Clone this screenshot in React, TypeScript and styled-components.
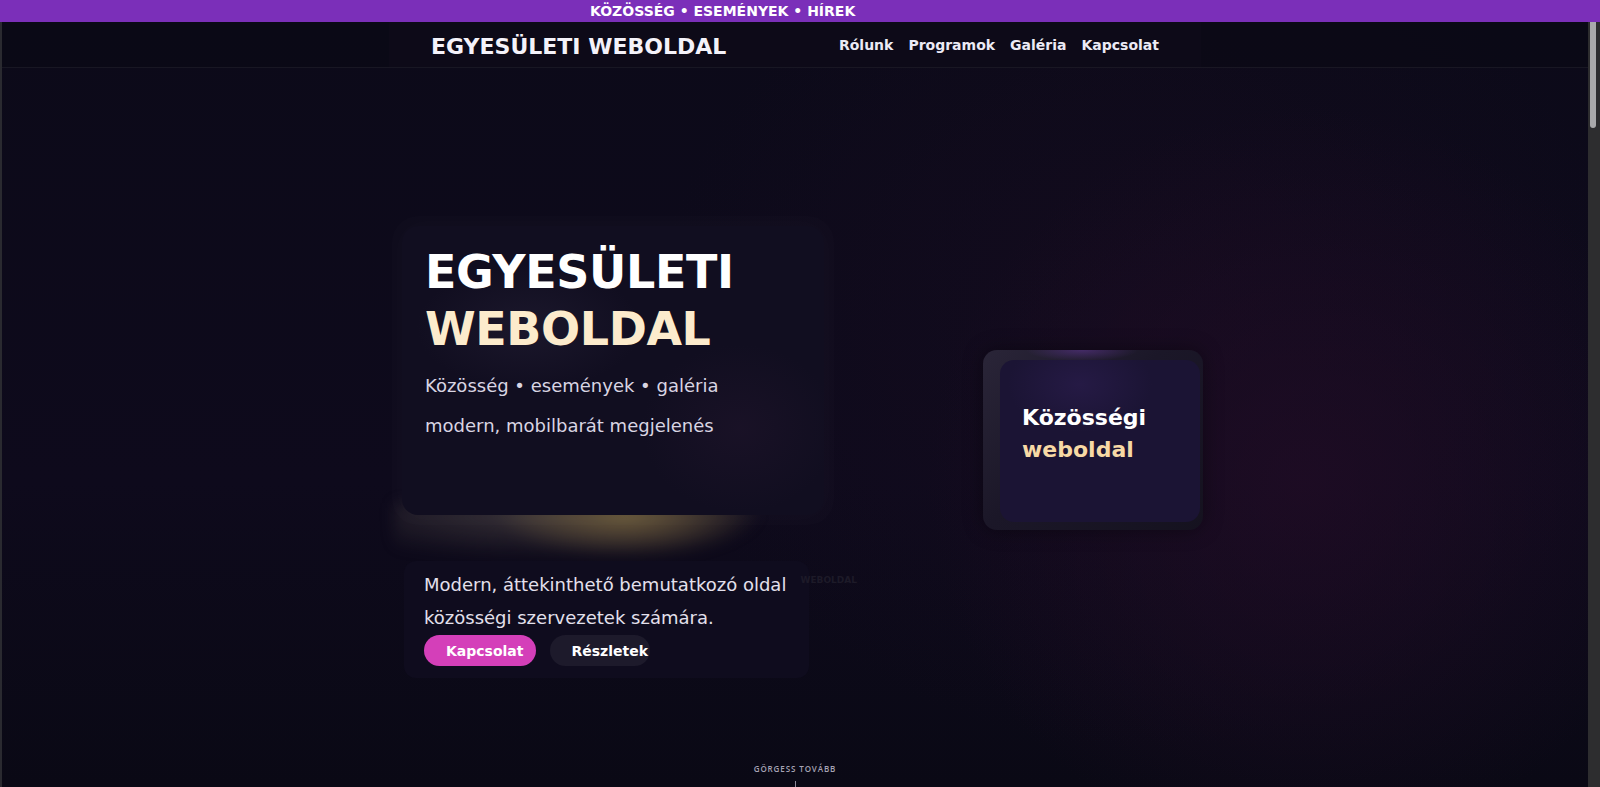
import React from 'react';
import styled, { createGlobalStyle } from 'styled-components';

const GlobalStyle = createGlobalStyle`
  html, body {
    margin: 0;
    padding: 0;
    height: 100%;
    overflow: hidden;
    background: #0c0a18;
  }
  body {
    font-family: 'DejaVu Sans', 'Noto Sans', sans-serif;
    color: #ffffff;
  }
  * {
    box-sizing: border-box;
  }
`;

const Page = styled.div`
  height: 100vh;
  display: flex;
  flex-direction: column;
`;

const TopBar = styled.div`
  height: 22px;
  flex: none;
  background: #7b2fb9;
  display: flex;
  align-items: center;
  padding-left: 590px;
  font-size: 14px;
  font-weight: bold;
  white-space: nowrap;
`;

const Body = styled.div`
  flex: 1;
  min-height: 0;
  display: flex;
`;

const Scroller = styled.div`
  flex: 1;
  overflow-y: auto;
  border-left: 2px solid #2a2a30;
  background:
    radial-gradient(ellipse 520px 520px at 82% 60%, rgba(34, 12, 38, 0.7), transparent 72%),
    radial-gradient(ellipse 700px 600px at 72% 40%, rgba(24, 12, 32, 0.55), transparent 70%),
    linear-gradient(180deg, #0c0a19 0%, #0e0a1c 60%, #0a0915 100%);
  background-repeat: no-repeat;
  background-size: 100% 765px;
  scrollbar-width: none;

  &::-webkit-scrollbar {
    display: none;
  }
`;

const ScrollTrack = styled.div`
  width: 12px;
  flex: none;
  background: #2d2d2f;
  padding: 0 4px 0 2px;
`;

const ScrollThumb = styled.div`
  height: 106px;
  background: #a9a9ab;
  border-radius: 0 0 3px 3px;
`;

const Content = styled.div`
  min-height: 5500px;
`;

const NavBar = styled.header`
  height: 46px;
  border-bottom: 1px solid rgba(255, 255, 255, 0.06);
  background: rgba(10, 8, 20, 0.6);
`;

const NavInner = styled.div`
  width: 812px;
  height: 100%;
  margin: 0 auto;
  padding: 0 42px;
  display: flex;
  align-items: center;
  justify-content: space-between;
  background: rgba(14, 11, 26, 0.7);
`;

const Logo = styled.div`
  font-size: 22px;
  font-weight: bold;
  color: #f4f2fa;
  padding-top: 4px;
`;

const NavLinks = styled.nav`
  display: flex;
  gap: 15px;
  font-size: 14px;
  font-weight: bold;
  color: #ecebf5;
  padding-top: 1px;
`;

const Hero = styled.section`
  width: 812px;
  margin: 0 auto;
  padding-top: 158px;
  display: flex;
  flex-direction: column;
`;

const HeroGrid = styled.div`
  display: grid;
  grid-template-columns: 470px 1fr;
  align-items: center;
  padding-left: 13px;
`;

const LeftColumn = styled.div`
  display: flex;
  flex-direction: column;
`;

const HeroCard = styled.div`
  position: relative;
  z-index: 1;
  width: 422px;
  height: 289px;
  border-radius: 16px;
  padding: 18px 23px;
  background:
    radial-gradient(ellipse 160px 90px at 30% 35%, rgba(50, 44, 70, 0.3), transparent 70%),
    radial-gradient(ellipse 140px 120px at 80% 70%, rgba(40, 24, 50, 0.35), transparent 70%),
    #110e20;
  box-shadow:
    0 0 0 10px rgba(255, 255, 255, 0.01),
    0 0 24px rgba(255, 255, 255, 0.025);
`;

const Title = styled.h1`
  margin: 0;
  font-size: 46px;
  line-height: 57px;
  font-weight: bold;
  letter-spacing: -0.4px;
`;

const TitleLine = styled.span<{ $accent?: boolean }>`
  display: block;
  color: ${p => (p.$accent ? '#fcebcc' : '#ffffff')};
`;

const Tagline = styled.p`
  margin: 8px 0 0 0;
  font-size: 18px;
  line-height: 40px;
  color: #d9d5e3;
`;

const Glow = styled.div`
  height: 58px;
  margin: -12px 70px 0 -8px;
  background:
    radial-gradient(ellipse 36% 85% at 57% 20%, rgba(125, 104, 62, 0.8), transparent 90%),
    radial-gradient(ellipse 62% 85% at 35% 20%, rgba(82, 74, 72, 0.6), transparent 90%);
  filter: blur(7px);
`;

const InfoWrap = styled.div`
  position: relative;
  width: 470px;
`;

const InfoCard = styled.div`
  width: 405px;
  margin-left: 2px;
  padding: 8px 20px 12px 20px;
  border-radius: 12px;
  background: #0f0c1e;
`;

const InfoText = styled.p`
  margin: 0;
  font-size: 18px;
  line-height: 32.5px;
  color: #e3e0ec;
`;

const FaintLabel = styled.span`
  position: absolute;
  top: 14px;
  right: 15px;
  font-size: 9px;
  font-weight: bold;
  color: #1d1a28;
`;

const Buttons = styled.div`
  display: flex;
  gap: 14px;
  margin-top: 1px;
`;

const Pill = styled.button<{ $primary?: boolean }>`
  height: 31px;
  border: none;
  border-radius: 16px;
  font-family: 'DejaVu Sans', sans-serif;
  font-size: 14px;
  font-weight: bold;
  color: #ffffff;
  text-align: left;
  padding: ${p => (p.$primary ? '0 12px 0 22px' : '0 2px 0 22px')};
  background: ${p => (p.$primary ? '#d43fb9' : '#1d1a2b')};
`;

const SideFrame = styled.div`
  justify-self: start;
  margin-left: 111px;
  margin-bottom: 24px;
  width: 220px;
  height: 180px;
  border-radius: 14px;
  padding: 10px 3px 8px 17px;
  background:
    radial-gradient(ellipse 70px 14px at 45% 0%, rgba(110, 60, 170, 0.45), transparent 80%),
    linear-gradient(135deg, #2a2538 0%, #1b1728 45%, #15121f 100%);
  box-shadow: 0 0 20px rgba(0, 0, 0, 0.4);
`;

const SideCard = styled.div`
  height: 100%;
  border-radius: 14px;
  padding: 42px 20px 0 22px;
  background:
    radial-gradient(ellipse 90px 60px at 40% 15%, rgba(44, 30, 80, 0.6), transparent 80%),
    #1b1434;
`;

const SideTitle = styled.div<{ $accent?: boolean }>`
  font-size: 22px;
  line-height: 32px;
  font-weight: bold;
  color: ${p => (p.$accent ? '#f7d9a5' : '#ffffff')};
`;

const ScrollHint = styled.div`
  margin-top: 85px;
  display: flex;
  flex-direction: column;
  align-items: center;
  gap: 7px;
  font-family: 'Open Sans', 'DejaVu Sans', sans-serif;
  font-size: 8px;
  font-weight: 600;
  letter-spacing: 0.9px;
  color: #a6a3b4;
`;

const HintLine = styled.span`
  width: 1px;
  height: 12px;
  background: #8d8a9a;
`;

export default function App() {
  return (
    <>
      <GlobalStyle />
      <Page>
        <TopBar>KÖZÖSSÉG • ESEMÉNYEK • HÍREK</TopBar>
        <Body>
          <Scroller>
            <Content>
              <NavBar>
                <NavInner>
                  <Logo>EGYESÜLETI WEBOLDAL</Logo>
                  <NavLinks>
                    <span>Rólunk</span>
                    <span>Programok</span>
                    <span>Galéria</span>
                    <span>Kapcsolat</span>
                  </NavLinks>
                </NavInner>
              </NavBar>
              <Hero>
                <HeroGrid>
                  <LeftColumn>
                    <HeroCard>
                      <Title>
                        <TitleLine>EGYESÜLETI</TitleLine>
                        <TitleLine $accent>WEBOLDAL</TitleLine>
                      </Title>
                      <Tagline>
                        Közösség • események • galéria
                        <br />
                        modern, mobilbarát megjelenés
                      </Tagline>
                    </HeroCard>
                    <Glow />
                    <InfoWrap>
                      <InfoCard>
                        <InfoText>
                          Modern, áttekinthető bemutatkozó oldal
                          <br />
                          közösségi szervezetek számára.
                        </InfoText>
                        <Buttons>
                          <Pill $primary>Kapcsolat</Pill>
                          <Pill>Részletek</Pill>
                        </Buttons>
                      </InfoCard>
                      <FaintLabel>WEBOLDAL</FaintLabel>
                    </InfoWrap>
                  </LeftColumn>
                  <SideFrame>
                    <SideCard>
                      <SideTitle>Közösségi</SideTitle>
                      <SideTitle $accent>weboldal</SideTitle>
                    </SideCard>
                  </SideFrame>
                </HeroGrid>
                <ScrollHint>
                  GÖRGESS TOVÁBB
                  <HintLine />
                </ScrollHint>
              </Hero>
            </Content>
          </Scroller>
          <ScrollTrack>
            <ScrollThumb />
          </ScrollTrack>
        </Body>
      </Page>
    </>
  );
}
